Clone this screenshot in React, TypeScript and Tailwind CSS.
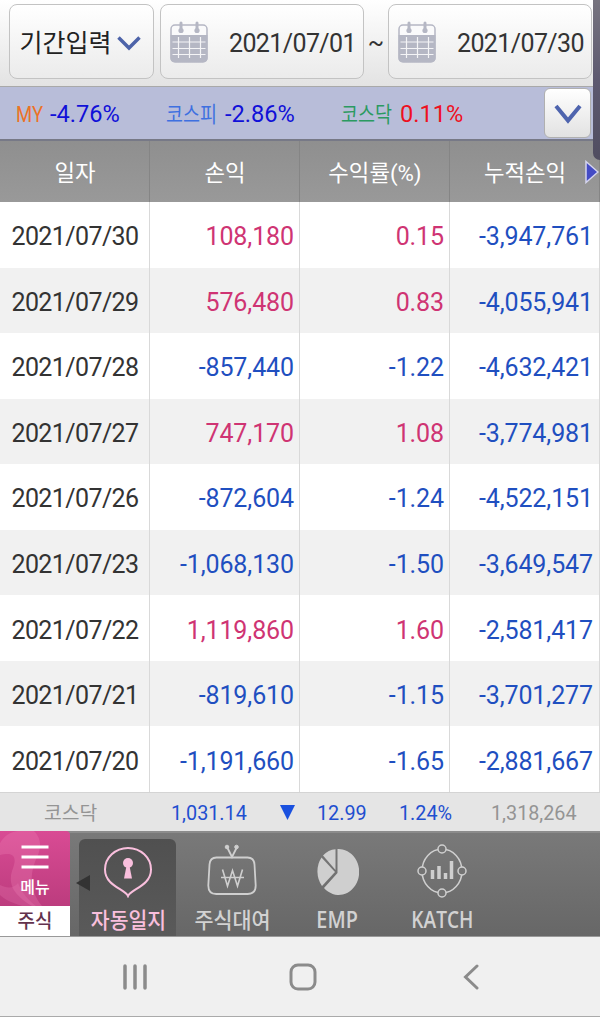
import { clsx } from "clsx";

type Row = {
  date: string;
  profit: string;
  rate: string;
  total: string;
};

const ROWS: Row[] = [
  { date: "2021/07/30", profit: "108,180", rate: "0.15", total: "-3,947,761" },
  { date: "2021/07/29", profit: "576,480", rate: "0.83", total: "-4,055,941" },
  { date: "2021/07/28", profit: "-857,440", rate: "-1.22", total: "-4,632,421" },
  { date: "2021/07/27", profit: "747,170", rate: "1.08", total: "-3,774,981" },
  { date: "2021/07/26", profit: "-872,604", rate: "-1.24", total: "-4,522,151" },
  { date: "2021/07/23", profit: "-1,068,130", rate: "-1.50", total: "-3,649,547" },
  { date: "2021/07/22", profit: "1,119,860", rate: "1.60", total: "-2,581,417" },
  { date: "2021/07/21", profit: "-819,610", rate: "-1.15", total: "-3,701,277" },
  { date: "2021/07/20", profit: "-1,191,660", rate: "-1.65", total: "-2,881,667" },
];

const HEADERS = ["일자", "손익", "수익률(%)", "누적손익"];

const signColor = (value: string) => (value.startsWith("-") ? "text-[#1f4fc0]" : "text-[#cf3473]");

function CalendarIcon() {
  return (
    <svg className="h-[42px] w-[38px] shrink-0" viewBox="0 0 38 42" fill="none">
      <rect x="1" y="4" width="36" height="37" rx="4" fill="#fafafb" stroke="#b5b7c4" strokeWidth="1.5" />
      <path d="M.5 14h37v23a4 4 0 0 1-4 4h-29a4 4 0 0 1-4-4z" fill="#b5b7c4" />
      <path d="M2.5 21h33M2.5 27.5h33M2.5 33.5h33M8.5 16v21M19.5 16v21M30.5 16v21" stroke="#f4f4f6" strokeWidth="1.2" />
      <path d="M11 2v8M27 2v8" stroke="#b5b7c4" strokeWidth="3" strokeLinecap="round" />
      <circle cx="11" cy="9.5" r="2.6" fill="#b5b7c4" />
      <circle cx="27" cy="9.5" r="2.6" fill="#b5b7c4" />
    </svg>
  );
}

function DateField({ value, className }: { value: string; className?: string }) {
  return (
    <button
      className={clsx(
        "flex h-[75px] w-[204px] items-center justify-between rounded-lg border border-[#c3c3c3] bg-gradient-to-b from-white to-[#ebebeb] pr-[7px] pl-[9px]",
        className
      )}
    >
      <CalendarIcon />
      <span className="pt-[3px] text-[25px] tracking-[-0.6px] text-[#333]">{value}</span>
    </button>
  );
}

function IndexItem({ label, value, color, valueColor, className }: {
  label: string;
  value: string;
  color: string;
  valueColor: string;
  className: string;
}) {
  return (
    <div className={clsx("flex items-center pt-1", className)}>
      <span className={clsx("origin-left scale-x-[0.84] text-[22px] whitespace-nowrap", color)}>{label}</span>
      <span className={clsx("text-[23.6px] whitespace-nowrap", valueColor)}>{value}</span>
    </div>
  );
}

function PinIcon() {
  return (
    <svg className="h-[52px] w-[50px]" viewBox="0 0 50 52" fill="none">
      <path d="M25 50C22 43 2 40 2 23.5A23 21.5 0 0 1 48 23.5C48 40 28 43 25 50z" stroke="#f9bfdd" strokeWidth="2" />
      <circle cx="25" cy="17" r="5" fill="#f9bfdd" />
      <path d="M23.5 20h3l2.5 12.5h-8z" fill="#f9bfdd" />
    </svg>
  );
}

function WonIcon() {
  return (
    <svg className="h-[52px] w-[52px]" viewBox="0 0 52 52" fill="none" stroke="#cfcfcf">
      <path d="M10.5 13.5h31q6.5 0 7 7l1.2 21q0 8.5-8 8.5h-31.4q-8 0-8-8.5l1.2-21q.5-7 7-7z" strokeWidth="1.8" />
      <path d="M21.5 4l4.5 9 4.5-9" strokeWidth="1.8" />
      <circle cx="21" cy="3" r="1.8" fill="#cfcfcf" />
      <circle cx="30.5" cy="3" r="1.8" fill="#cfcfcf" />
      <path d="M16.5 25.5L21.5 42 26.5 26.5 31.5 42 36.5 25.5M15 33.5h23" strokeWidth="1.6" />
    </svg>
  );
}

function PieIcon() {
  return (
    <svg className="h-[48px] w-[44px]" viewBox="0 0 44 48" fill="#cfcfcf">
      <path d="M22.5 1A20.500 23 0 1 1 9 40L22.500 25z" />
      <path d="M20.5 1.2V22L8 7.5A20 23 0 0 1 20.5 1.2z" />
      <path d="M6.5 9.5L20 24 7 38A20 23 0 0 1 6.5 9.5z" />
    </svg>
  );
}

function KatchIcon() {
  return (
    <svg className="h-[54px] w-[50px]" viewBox="0 0 50 54" fill="none" stroke="#cfcfcf" strokeWidth="1.5">
      <ellipse cx="25" cy="27" rx="20" ry="22" />
      <g fill="#737373">
        <circle cx="25" cy="5" r="4" />
        <circle cx="5" cy="27" r="4" />
        <circle cx="45" cy="27" r="4" />
        <circle cx="25" cy="49" r="4" />
      </g>
      <path d="M15.5 35v-9M22 35V22M28.5 35v-6M34.5 35V17" strokeWidth="3.5" />
    </svg>
  );
}

export default function App() {
  return (
    <div className="relative flex h-[1017px] w-[600px] flex-col overflow-hidden bg-white font-[Roboto,'Noto_Sans_CJK_KR',sans-serif] leading-none">
      {/* Period selector */}
      <div className="flex h-[87px] shrink-0 border-b border-[#a9a9a9] bg-gradient-to-b from-white to-[#e3e3e3] pt-1 pl-[9px]">
        <button className="flex h-[75px] w-[145px] items-center rounded-lg border border-[#c3c3c3] bg-gradient-to-b from-white to-[#ebebeb] pl-[9px] text-[25px] text-[#222]">
          <span className="w-[93px] pt-[3px] whitespace-nowrap">기간입력</span>
          <svg className="mt-0.5 ml-[5px] h-4 w-6" viewBox="0 0 24 16" fill="none" stroke="#4d63a9" strokeWidth="3.5">
            <path d="M1.5 2.5l10.5 10.5 10.5-10.5" />
          </svg>
        </button>
        <DateField value="2021/07/01" className="ml-1.5" />
        <span className="flex w-6 items-center justify-center pb-1 text-[24px] text-[#333]">~</span>
        <DateField value="2021/07/30" />
      </div>

      {/* Index comparison */}
      <div className="flex h-[54px] shrink-0 items-center border-b-2 border-[#777987] bg-[#b8bdd9] pl-4">
        <IndexItem label="MY" value="-4.76%" color="text-[#ec7226] w-[34px]" valueColor="text-[#1010d8]" className="w-[150px]" />
        <IndexItem label="코스피" value="-2.86%" color="text-[#3e70e0] w-[59px]" valueColor="text-[#1010d8]" className="w-[175px]" />
        <IndexItem label="코스닥" value="0.11%" color="text-[#2b9a61] w-[59px]" valueColor="text-[#ee1021]" className="w-[203px]" />
        <button className="flex h-[50px] w-[47px] items-center justify-center rounded-md border border-[#b0b0b0] bg-gradient-to-b from-white to-[#e2e2e2]">
          <svg className="mt-0.5 h-5 w-7" viewBox="0 0 28 20" fill="none" stroke="#4e64ae" strokeWidth="4">
            <path d="M2 2l12 14.5 12-14.5" />
          </svg>
        </button>
      </div>

      {/* Table header */}
      <div className="relative grid h-[61px] shrink-0 grid-cols-4 bg-gradient-to-b from-[#8f8f8f] to-[#999]">
        {HEADERS.map((label) => (
          <div key={label} className="flex items-center justify-center border-r border-[#858585] pt-[3px] pl-px text-[22.3px] text-white">
            {label}
          </div>
        ))}
        <svg className="absolute top-[19px] right-px h-6 w-[14px]" viewBox="0 0 14 24">
          <path d="M1 1.5L13 12 1 22.5z" fill="#444bc5" stroke="#d5d5ee" strokeWidth="1.5" />
        </svg>
      </div>

      {/* Daily rows */}
      <div className="grid h-[590px] shrink-0 grid-rows-9 text-[25px] tracking-[-0.1px]">
        {ROWS.map((row) => (
          <div key={row.date} className="grid grid-cols-4 odd:bg-white even:bg-[#f1f1f1]">
            <div className="flex items-center justify-center border-r border-[#d9d9d9] pt-1 pl-px tracking-[-0.6px] text-[#333]">
              {row.date}
            </div>
            <div className={clsx("flex items-center justify-end border-r border-[#d9d9d9] pt-1 pr-[5px]", signColor(row.profit))}>
              {row.profit}
            </div>
            <div className={clsx("flex items-center justify-end border-r border-[#d9d9d9] pt-1 pr-[5px]", signColor(row.rate))}>
              {row.rate}
            </div>
            <div className={clsx("flex items-center justify-end border-r border-[#d9d9d9] pt-1 pr-[6px]", signColor(row.total))}>
              {row.total}
            </div>
          </div>
        ))}
      </div>

      {/* Market ticker */}
      <div className="flex h-[39px] shrink-0 items-center border-t border-[#d4d4d4] bg-[#e5e5e5] pt-[3px] text-[19.8px] text-[#1f4fd0]">
        <span className="w-[171px] pl-[44px] text-[19.3px] text-[#949494]">코스닥</span>
        <span className="w-[109px]">1,031.14</span>
        <svg className="-mt-0.5 h-[15px] w-[15px]" viewBox="0 0 15 15">
          <path d="M0 0h15l-7.5 15z" fill="#1a51df" />
        </svg>
        <span className="w-[104px] pl-[22px]">12.99</span>
        <span className="w-[92px]">1.24%</span>
        <span className="text-[#949494]">1,318,264</span>
      </div>

      {/* Bottom menu */}
      <nav className="flex h-[106px] shrink-0 border-t-2 border-b border-t-[#8c8c8c] border-b-[#999] bg-gradient-to-b from-[#797979] to-[#676767] text-[22px] font-medium text-[#d2d2d2]">
        <div className="-mt-0.5 flex w-[70px] flex-col">
          <button className="relative flex h-[75px] flex-col items-center overflow-hidden rounded-tr bg-gradient-to-b from-[#d94b94] to-[#bc3c7e] text-white">
            <svg className="absolute inset-0 h-full w-full" viewBox="0 0 70 75" fill="none">
              <path d="M0 12C5 4 10 1 18 0H34C40 6 42 14 38 24 30 40 28 58 42 75H32C14 64 8 54 12 40 17 28 16 20 0 24z" fill="#ed80b6" opacity=".3" />
              <path d="M0 54c8 4 14 3 18-2 4 10 10 17 18 23H22C12 72 4 68 0 64z" fill="#ed80b6" opacity=".25" />
            </svg>
            <svg className="relative mt-[14px] h-6 w-7" viewBox="0 0 28 24" stroke="#fff" strokeWidth="3">
              <path d="M.5 2h27M.5 12h27M.5 22h27" />
            </svg>
            <span className="relative mt-[11px] text-[16px]">메뉴</span>
          </button>
          <span className="flex flex-1 items-center justify-center bg-white text-[19px] text-[#63324d]">주식</span>
        </div>

        <div className="relative mt-[6px] ml-[9px] flex w-[97px] flex-col items-center rounded-t-md bg-gradient-to-b from-[#505050] to-[#5a5a5a] pt-[7px] text-[#f9bfdd]">
          <svg className="absolute top-[36px] -left-[3px] h-4 w-[14px]" viewBox="0 0 14 16">
            <path d="M14 0v16L0 8z" fill="#333" />
          </svg>
          <PinIcon />
          <span className="mt-[12px] ml-0.5 origin-center scale-x-[0.93] whitespace-nowrap">자동일지</span>
        </div>

        <div className="flex w-[112px] flex-col items-center pt-[11px]">
          <WonIcon />
          <span className="mt-[14px] ml-px scale-x-[0.94] whitespace-nowrap">주식대여</span>
        </div>
        <div className="flex w-[98px] flex-col items-center pt-[15px]">
          <PieIcon />
          <span className="mt-[12px] ml-px scale-x-[0.86] font-['Open_Sans'] text-[23px] font-semibold">EMP</span>
        </div>
        <div className="flex w-[112px] flex-col items-center pt-[11px]">
          <KatchIcon />
          <span className="mt-[10px] scale-x-[0.83] font-['Open_Sans'] text-[23px] font-semibold">KATCH</span>
        </div>
      </nav>

      {/* Android navigation bar */}
      <div className="flex h-20 shrink-0 items-center border-b border-[#aaa] bg-[#f0f0f0] pl-[123px]">
        <svg className="h-[26px] w-6" viewBox="0 0 24 26" stroke="#8b8b8b" strokeWidth="3.5" strokeLinecap="round">
          <path d="M2 2v22M12 2v22M22 2v22" />
        </svg>
        <svg className="ml-[142px] h-7 w-7" viewBox="0 0 28 28" fill="none" stroke="#8b8b8b" strokeWidth="3">
          <rect x="2" y="2" width="24" height="24" rx="7" />
        </svg>
        <svg className="ml-[146px] h-[26px] w-4" viewBox="0 0 16 26" fill="none" stroke="#8b8b8b" strokeWidth="3" strokeLinecap="round">
          <path d="M14 2L2.5 13 14 24" />
        </svg>
      </div>

      {/* Edge panel */}
      <div className="absolute top-0 right-0 h-[160px] w-[7px] rounded-bl-lg bg-gradient-to-b from-[#77747f] via-[#5d5970] to-[#504d60]" />
    </div>
  );
}
